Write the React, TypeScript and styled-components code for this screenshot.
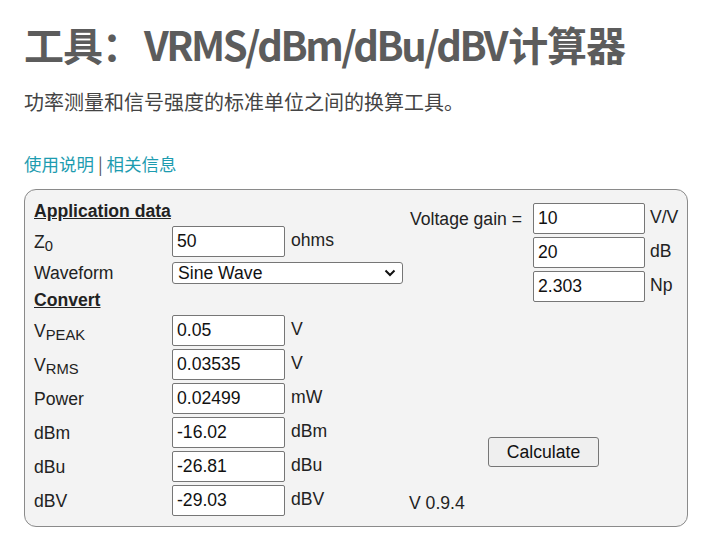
import React, { useState } from "react";
import styled, { createGlobalStyle } from "styled-components";

const GlobalStyle = createGlobalStyle`
  html, body {
    margin: 0;
    padding: 0;
    background: #ffffff;
  }
  body {
    font-family: "Liberation Sans", Arial, "Noto Sans CJK SC", sans-serif;
    color: #222;
  }
`;

const Page = styled.div`
  padding: 16px 13px 10px 24px;
  width: 701px;
  box-sizing: border-box;
`;

const Title = styled.h1`
  margin: 0;
  font-family: "Noto Sans CJK SC", sans-serif;
  font-weight: 700;
  font-size: 40px;
  line-height: 56px;
  color: #5c5c5c;
  letter-spacing: -1px;
  white-space: nowrap;
`;

const Latin = styled.span`
  letter-spacing: -2.5px;
  margin-left: 3px;
  margin-right: 2px;
`;

const Subtitle = styled.p`
  margin: 16px 0 0;
  font-family: "Noto Sans CJK SC", sans-serif;
  font-size: 20px;
  line-height: 28px;
  color: #444;
`;

const LinkBar = styled.div`
  margin-top: 36px;
  font-family: "Noto Sans CJK SC", sans-serif;
  font-size: 17.5px;
  line-height: 24px;
  color: #555;
`;

const Link = styled.a`
  color: #1d9cb0;
  text-decoration: none;
  cursor: pointer;
`;

const Panel = styled.div`
  margin-top: 13px;
  width: 664px;
  box-sizing: border-box;
  border: 1px solid #8a8a8a;
  border-radius: 12px;
  background: #f3f3f3;
  padding: 11px 0 10px 9px;
  display: flex;
  font-size: 17.6px;
  color: #222;
`;

const LeftCol = styled.div`
  width: 376px;
  display: flex;
  flex-direction: column;
`;

const RightCol = styled.div`
  flex: 1;
  display: flex;
  flex-direction: column;
  padding-top: 2px;
`;

const Heading = styled.div<{ $top?: number }>`
  font-weight: 700;
  text-decoration: underline;
  line-height: 20px;
  margin-top: ${(p) => p.$top ?? 0}px;
  color: #222;
`;

const Row = styled.div<{ $top?: number; $label?: number; $field?: number }>`
  display: grid;
  grid-template-columns: ${(p) => p.$label ?? 138}px ${(p) => p.$field ?? 119}px auto;
  align-items: center;
  margin-top: ${(p) => p.$top ?? 3}px;
`;

const Label = styled.div`
  line-height: 20px;
  white-space: nowrap;
`;

const Sub = styled.sub`
  font-size: 0.84em;
  vertical-align: -3px;
  line-height: 0;
`;

const Unit = styled.div`
  line-height: 20px;
  margin-top: -4px;
`;

const Field = styled.input<{ $w?: number }>`
  width: ${(p) => p.$w ?? 113}px;
  height: 31px;
  box-sizing: border-box;
  border: 1px solid #767676;
  border-radius: 2px;
  background: #fff;
  padding: 0 4px;
  font-family: "Liberation Sans", Arial, sans-serif;
  font-size: 17.6px;
  color: #111;
  outline: none;
`;

const SelectRow = styled.div`
  display: grid;
  grid-template-columns: 138px auto;
  align-items: center;
  margin-top: 5px;
`;

const SelectWrap = styled.div`
  position: relative;
  width: 231px;
  height: 22px;
`;

const Select = styled.select`
  appearance: none;
  width: 231px;
  height: 22px;
  box-sizing: border-box;
  border: 1px solid #767676;
  border-radius: 3px;
  background: #fff;
  padding: 0 4px 0 5px;
  font-family: "Liberation Sans", Arial, sans-serif;
  font-size: 17.6px;
  line-height: 20px;
  color: #111;
  outline: none;
`;

const Chevron = styled.svg`
  position: absolute;
  right: 7px;
  top: 7px;
  pointer-events: none;
`;

const Button = styled.button`
  margin: 135px 0 0 78px;
  width: 111px;
  height: 30px;
  box-sizing: border-box;
  border: 1px solid #767676;
  border-radius: 3px;
  background: #efefef;
  font-family: "Liberation Sans", Arial, sans-serif;
  font-size: 17.6px;
  color: #111;
  cursor: pointer;
`;

const Version = styled.div`
  margin-top: 26px;
  margin-left: -1px;
  line-height: 20px;
`;

type Conv = { label: React.ReactNode; value: string; unit: string };

const convertRows: Conv[] = [
  { label: <>V<Sub>PEAK</Sub></>, value: "0.05", unit: "V" },
  { label: <>V<Sub>RMS</Sub></>, value: "0.03535", unit: "V" },
  { label: "Power", value: "0.02499", unit: "mW" },
  { label: "dBm", value: "-16.02", unit: "dBm" },
  { label: "dBu", value: "-26.81", unit: "dBu" },
  { label: "dBV", value: "-29.03", unit: "dBV" },
];

const gainRows = [
  { label: "Voltage gain =", value: "10", unit: "V/V" },
  { label: "", value: "20", unit: "dB" },
  { label: "", value: "2.303", unit: "Np" },
];

function App() {
  const [z0, setZ0] = useState("50");
  const [wave, setWave] = useState("sine");

  return (
    <Page>
      <GlobalStyle />
      <Title>
        工具：<Latin>VRMS/dBm/dBu/dBV</Latin>计算器
      </Title>
      <Subtitle>功率测量和信号强度的标准单位之间的换算工具。</Subtitle>
      <LinkBar>
        <Link>使用说明</Link> | <Link>相关信息</Link>
      </LinkBar>
      <Panel>
        <LeftCol>
          <Heading>Application data</Heading>
          <Row $top={5}>
            <Label>
              Z<Sub>0</Sub>
            </Label>
            <Field value={z0} onChange={(e) => setZ0(e.target.value)} />
            <Unit>ohms</Unit>
          </Row>
          <SelectRow>
            <Label>Waveform</Label>
            <SelectWrap>
              <Select value={wave} onChange={(e) => setWave(e.target.value)}>
                <option value="sine">Sine Wave</option>
                <option value="square">Square Wave</option>
                <option value="triangle">Triangle Wave</option>
              </Select>
              <Chevron width="12" height="8" viewBox="0 0 12 8">
                <path d="M1.5 1.5 L6 6 L10.5 1.5" fill="none" stroke="#111" strokeWidth="2" />
              </Chevron>
            </SelectWrap>
          </SelectRow>
          <Heading $top={6}>Convert</Heading>
          {convertRows.map((r, i) => (
            <Row key={i} $top={i === 0 ? 5 : 3}>
              <Label>{r.label}</Label>
              <Field defaultValue={r.value} />
              <Unit>{r.unit}</Unit>
            </Row>
          ))}
        </LeftCol>
        <RightCol>
          {gainRows.map((r, i) => (
            <Row key={i} $label={123} $field={117} $top={i === 0 ? 0 : 3}>
              <Label>{r.label}</Label>
              <Field $w={112} defaultValue={r.value} />
              <Unit>{r.unit}</Unit>
            </Row>
          ))}
          <div>
            <Button>Calculate</Button>
          </div>
          <Version>V 0.9.4</Version>
        </RightCol>
      </Panel>
    </Page>
  );
}

export default App;
